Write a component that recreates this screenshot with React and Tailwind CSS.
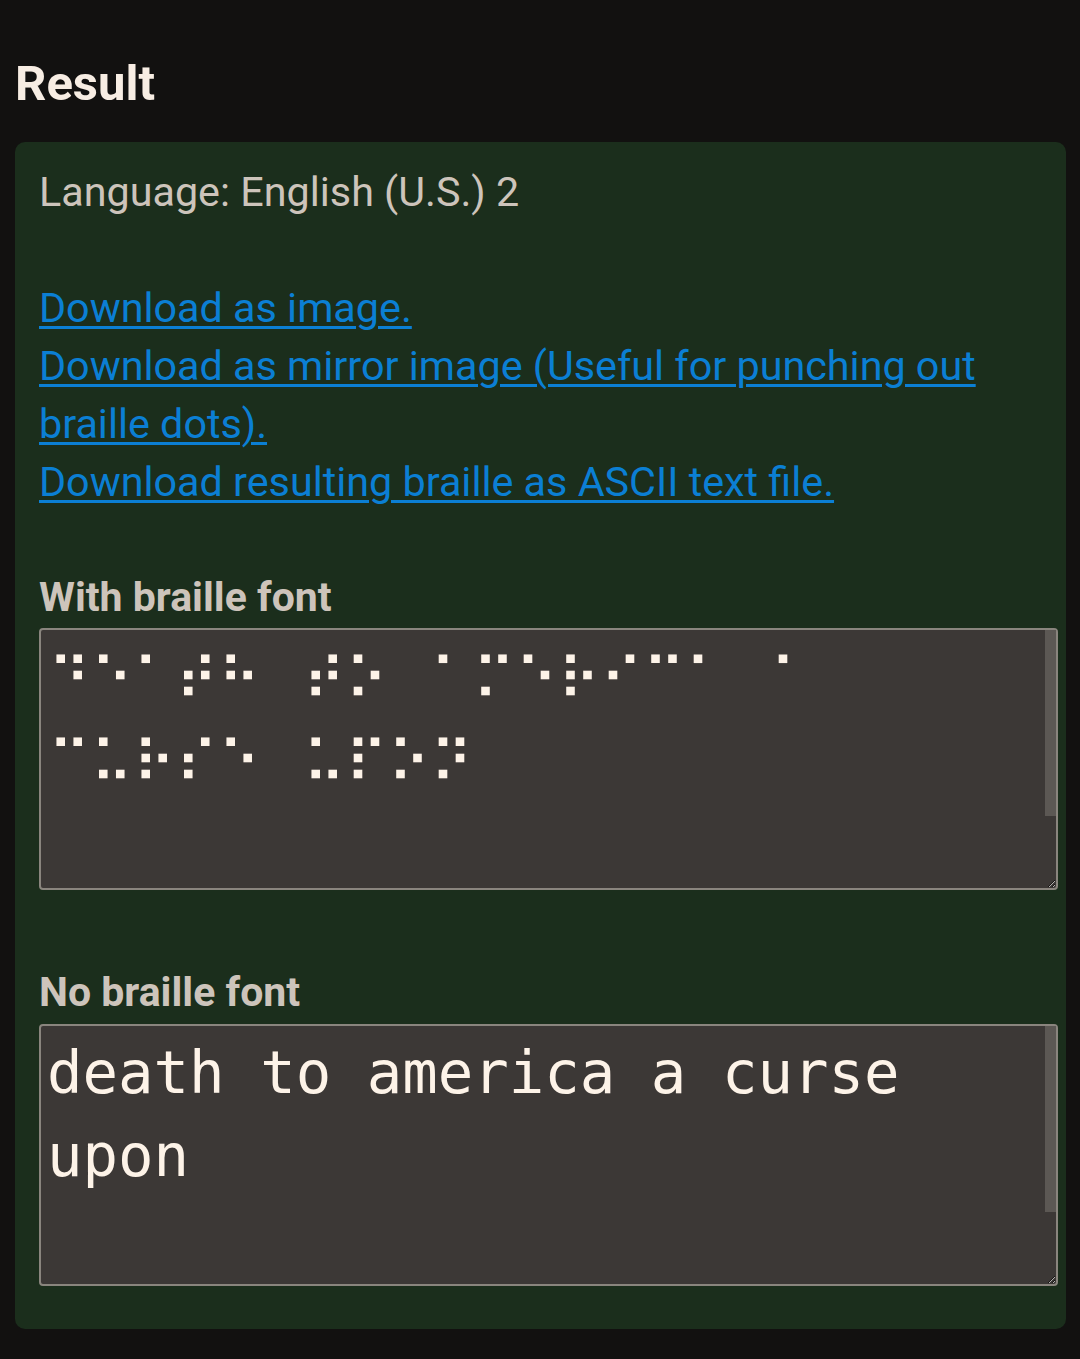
import React from 'react'

const braille = '⠙⠑⠁⠞⠓⠀⠞⠕⠀⠁⠍⠑⠗⠊⠉⠁⠀⠁\n⠉⠥⠗⠎⠑⠀⠥⠏⠕⠝'
const plain = 'death to america a curse upon'

function OutputBox({ value, braille: isBraille }) {
  return (
    <div className="relative w-[1019px]">
      <textarea
        readOnly
        value={value}
        className={
          isBraille
            ? "block h-[262px] w-full resize overflow-hidden rounded-[4px] border-2 border-[#8a857e] bg-[#3c3836] px-[7px] pb-[3px] pt-[9px] font-['DejaVu_Sans',sans-serif] text-[58px] leading-[83px] text-[#fdf3e8] outline-none [color-scheme:dark]"
            : "block h-[262px] w-full resize overflow-hidden rounded-[4px] border-2 border-[#8a857e] bg-[#3c3836] px-[6px] pb-[3px] pt-[5px] font-['DejaVu_Sans_Mono',monospace] text-[59px] leading-[83px] text-[#fdf3e8] outline-none [color-scheme:dark]"
        }
      />
      <div className="absolute right-[2px] top-[2px] h-[186px] w-[11px] bg-[#5c5854]" />
    </div>
  )
}

export default function App() {
  return (
    <div className="min-h-[1359px] bg-[#121110] px-[15px] pt-[56px] font-['Roboto',sans-serif]">
      <h2 className="text-[49px] font-bold leading-[56px] text-[#f7ede3]">Result</h2>
      <div className="mt-[30px] w-[1051px] rounded-[10px] bg-[#1b2e1c] pb-[43px] pl-[24px] pr-[8px] pt-[21px]">
        <div className="text-[41.3px] leading-[58px] text-[#cdc4bb]">
          <p>Language: English (U.S.) 2</p>
          <p className="h-[58px]" />
          <div className="flex flex-col items-start text-[#0b7fd4]">
            <a href="#" className="underline decoration-[3px] underline-offset-[4px]">Download as image.</a>
            <a href="#" className="underline decoration-[3px] underline-offset-[4px]">
              Download as mirror image (Useful for punching out
              <br />
              braille dots).
            </a>
            <a href="#" className="underline decoration-[3px] underline-offset-[4px]">Download resulting braille as ASCII text file.</a>
          </div>
        </div>

        <h3 className="mt-[63px] text-[41px] font-bold leading-[47px] text-[#cdc4bb]">With braille font</h3>
        <div className="mt-[7px]">
          <OutputBox value={braille} braille />
        </div>

        <h3 className="mt-[79px] text-[41px] font-bold leading-[47px] text-[#cdc4bb]">No braille font</h3>
        <div className="mt-[8px]">
          <OutputBox value={plain} />
        </div>
      </div>
    </div>
  )
}
